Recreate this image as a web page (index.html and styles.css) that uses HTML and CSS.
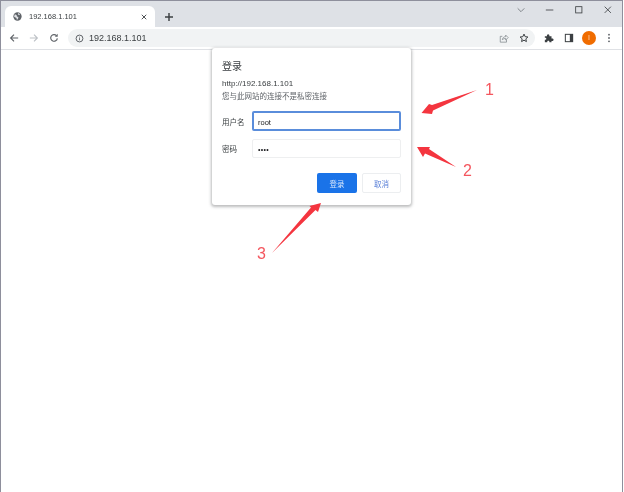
FILE: index.html
```html
<!DOCTYPE html>
<html lang="zh-CN">
<head>
    <meta charset="UTF-8">
    <meta name="viewport" content="width=device-width, initial-scale=1.0">
    <title>192.168.1.101</title>
    <link rel="stylesheet" href="styles.css">
</head>
<body>
    <div class="window">
        <div class="tabstrip">
            <div class="tab">
                <svg class="favicon" viewBox="0 0 10 10"><circle cx="5" cy="5" r="4.6" fill="#5f6368"/><path d="M2 2.6l2 .8.4 1.6 1.6.6-.4 2-1.2 1.4-.6-2.2L1.2 5.4zM6 1l1.8 1.4-1 1.2L5.4 2.4z" fill="#dfe1e5"/></svg>
                <span class="tab-title">192.168.1.101</span>
                <svg class="tab-close" viewBox="0 0 8 8"><path d="M1 1l6 6M7 1L1 7" stroke="#3c4043" stroke-width="1.2"/></svg>
            </div>
            <svg class="new-tab" viewBox="0 0 10 10"><path d="M5 0v10M0 5h10" stroke="#3c4043" stroke-width="1.8"/></svg>
            <div class="window-controls">
                <svg viewBox="0 0 12 12"><path d="M2 4l4 4 4-4" fill="none" stroke="#70757a"/></svg>
                <svg viewBox="0 0 12 12"><path d="M1 6h9" stroke="#3c4043"/></svg>
                <svg viewBox="0 0 12 12"><rect x="2" y="2" width="7.5" height="7.5" fill="none" stroke="#3c4043"/></svg>
                <svg viewBox="0 0 12 12"><path d="M2 2l7.5 7.5M9.5 2L2 9.5" stroke="#3c4043"/></svg>
            </div>
        </div>
        <div class="toolbar">
            <svg class="nav" viewBox="0 0 12 12"><path d="M11 6H2M6 2L2 6l4 4" fill="none" stroke="#5f6368" stroke-width="1.4"/></svg>
            <svg class="nav" viewBox="0 0 12 12"><path d="M1 6h9M6 2l4 4-4 4" fill="none" stroke="#bdc1c6" stroke-width="1.4"/></svg>
            <svg class="nav" viewBox="0 0 12 12"><path d="M10 6.5A4 4 0 1 1 9 3.2" fill="none" stroke="#5f6368" stroke-width="1.4"/><path d="M10.4 1v3.4H7z" fill="#5f6368"/></svg>
            <div class="omnibox">
                <svg class="info" viewBox="0 0 10 10"><circle cx="5" cy="5" r="3.8" fill="none" stroke="#5f6368" stroke-width="1.1"/><path d="M5 3v.9M5 4.6v2.4" stroke="#5f6368"/></svg>
                <span class="url">192.168.1.101</span>
                <svg class="omni-icon share" viewBox="0 0 12 12"><path d="M4 4H1.5v7H9V8M4 8c.3-2.500 2-3.600 4-3.600V2.500l3 3-3 3V6.500C6.500 6.500 5 7 4 8z" fill="none" stroke="#80868b" stroke-width=".9"/></svg>
                <svg class="omni-icon" viewBox="0 0 12 12"><path d="M6 1.300l1.400 3.100 3.300.4-2.500 2.200.7 3.300L6 8.600 3.100 10.300l.7-3.300L1.300 4.800l3.300-.4z" fill="none" stroke="#3c4043" stroke-width="1.2"/></svg>
            </div>
            <div class="toolbar-actions">
                <svg class="puzzle" viewBox="0 0 12 12"><path d="M1 4h2.500C3.300 2.600 4 1.500 5 1.500S6.700 2.600 6.500 4H9v2.500c1.400-.2 2.500.5 2.500 1.500S10.400 9.700 9 9.500V11H6.500c.2-1.200-.5-1.800-1.300-1.800S3.700 9.800 3.900 11H1V8.200c1 .2 1.800-.4 1.800-1.200S2 5.600 1 5.800z" fill="#3c4043"/></svg>
                <svg class="panel" viewBox="0 0 12 12"><rect x="1" y="1" width="10" height="10" fill="#3c4043"/><rect x="2.200" y="2.200" width="4.800" height="7.600" fill="#fff"/></svg>
                <div class="avatar">I</div>
                <svg class="dots" viewBox="0 0 4 12"><circle cx="2" cy="2" r="1.1" fill="#5f6368"/><circle cx="2" cy="6" r="1.1" fill="#5f6368"/><circle cx="2" cy="10" r="1.1" fill="#5f6368"/></svg>
            </div>
        </div>
        <div class="page"></div>
    </div>

    <div class="dialog">
        <h2 class="dialog-title">登录</h2>
        <p class="dialog-url">http://192.168.1.101</p>
        <p class="dialog-note">您与此网站的连接不是私密连接</p>
        <div class="field">
            <label>用户名</label>
            <div class="input focused">root</div>
        </div>
        <div class="field">
            <label>密码</label>
            <div class="input dots-value">••••</div>
        </div>
        <div class="dialog-buttons">
            <button class="btn primary">登录</button>
            <button class="btn">取消</button>
        </div>
    </div>

    <svg class="arrows" viewBox="0 0 624 492">
        <polygon points="477,90 432,105 429,104 421.500,113 432,114 433,110.500" fill="#f4353f"/>
        <polygon points="456,167 429,149 430,147 417,147 423,157 425,153.500" fill="#f4353f"/>
        <polygon points="272,253 311,207.500 309.500,206 321,203 318,212 315.500,210" fill="#f4353f"/>
    </svg>
    <span class="mark mark-1">1</span>
    <span class="mark mark-2">2</span>
    <span class="mark mark-3">3</span>
</body>
</html>
```

FILE: styles.css
```css
html, body {
    margin: 0;
    padding: 0;
    width: 624px;
    height: 492px;
    overflow: hidden;
    background: #fff;
    font-family: "Liberation Sans", "Noto Sans CJK SC", sans-serif;
}

.window {
    box-sizing: border-box;
    width: 623px;
    height: 492px;
    display: flex;
    flex-direction: column;
    border: 1px solid #8e8f9c;
    border-bottom: none;
}

/* tab strip */
.tabstrip {
    height: 26px;
    flex: none;
    display: flex;
    align-items: flex-end;
    padding-left: 4px;
    background: #dee1e6;
}

.tab {
    box-sizing: border-box;
    width: 150px;
    height: 21px;
    display: flex;
    align-items: center;
    padding: 0 8px;
    background: #fff;
    border-radius: 6px 6px 0 0;
}

.favicon {
    width: 9px;
    height: 9px;
}

.tab-title {
    margin-left: 7px;
    font-size: 7.5px;
    color: #3c4043;
}

.tab-close {
    width: 6px;
    height: 6px;
    margin-left: auto;
}

.new-tab {
    width: 8px;
    height: 8px;
    margin: 0 0 6px 10px;
}

.window-controls {
    margin-left: auto;
    align-self: flex-start;
    display: flex;
    gap: 19px;
    padding: 4px 9px 0 0;
}

.window-controls svg {
    width: 10px;
    height: 10px;
}

/* toolbar */
.toolbar {
    height: 22px;
    flex: none;
    display: flex;
    align-items: center;
    padding-left: 8px;
    background: #fff;
    border-bottom: 1px solid #dfe1e5;
}

.nav {
    width: 10px;
    height: 10px;
    margin-right: 10px;
}

.omnibox {
    box-sizing: border-box;
    width: 467px;
    height: 18px;
    display: flex;
    align-items: center;
    margin-left: -1px;
    padding: 0 6px 0 7px;
    background: #f1f3f4;
    border-radius: 9px;
}

.info {
    width: 9px;
    height: 9px;
}

.url {
    margin-left: 5px;
    font-size: 9px;
    color: #3c4043;
}

.omni-icon {
    width: 10px;
    height: 10px;
}

.share {
    margin-left: auto;
    margin-right: 10px;
}

.toolbar-actions {
    display: flex;
    align-items: center;
    margin-left: 9px;
}

.puzzle {
    width: 10px;
    height: 10px;
}

.panel {
    width: 10px;
    height: 10px;
    margin-left: 10px;
}

.avatar {
    width: 14px;
    height: 14px;
    margin-left: 8px;
    border-radius: 50%;
    background: #f06c00;
    color: #fbd9bd;
    font-size: 7px;
    line-height: 14px;
    text-align: center;
}

.dots {
    width: 4px;
    height: 10px;
    margin-left: 11px;
}

.page {
    flex: 1;
    background: #fff;
}

/* the reference is a slightly soft, rescaled capture */
.window, .dialog, .arrows, .mark {
    filter: blur(0.35px);
}

/* login dialog, sits over the page */
.dialog {
    position: absolute;
    left: 212px;
    top: 48px;
    box-sizing: border-box;
    width: 199px;
    height: 157px;
    padding: 11px 10px 0 10px;
    background: #fff;
    border-radius: 3px;
    box-shadow: 0 1px 3px 1px rgba(60, 64, 67, 0.35);
    color: #3c4043;
}

.dialog-title {
    margin: 0;
    padding-top: 2px;
    font-size: 10px;
    font-weight: normal;
    line-height: 12px;
    color: #3c4043;
}

.dialog-url {
    margin: 6px 0 0;
    font-size: 8px;
    line-height: 10px;
}

.dialog-note {
    margin: 3px 0 9px;
    font-size: 7.5px;
    line-height: 10px;
    color: #5f6368;
}

.field {
    display: flex;
    align-items: center;
    margin-bottom: 8px;
}

.field label {
    width: 30px;
    flex: none;
    font-size: 7.5px;
}

.input {
    box-sizing: border-box;
    width: 150px;
    height: 19px;
    padding: 1px 5px 0;
    border: 1px solid #eeeff0;
    border-radius: 2px;
    font-size: 7.5px;
    line-height: 17px;
    color: #202124;
}

.input.focused {
    height: 20px;
    border: 2px solid #5a8ddb;
    line-height: 17px;
    padding: 1px 4px 0;
}

.dots-value {
    font-size: 7px;
    letter-spacing: 0.3px;
}

.dialog-buttons {
    display: flex;
    justify-content: flex-end;
    gap: 5px;
    margin-top: 15px;
}

.btn {
    box-sizing: border-box;
    width: 39px;
    height: 20px;
    padding: 0;
    border: 1px solid #eceef0;
    border-radius: 2px;
    background: #fff;
    color: #5a80d8;
    font-family: inherit;
    font-size: 7.5px;
}

.btn.primary {
    width: 40px;
    border: none;
    background: #1a73e8;
    color: #d6e6fb;
}

/* annotations */
.arrows {
    position: absolute;
    left: 0;
    top: 0;
    width: 624px;
    height: 492px;
}

.mark {
    position: absolute;
    font-family: "Liberation Sans", sans-serif;
    font-size: 16px;
    line-height: 18px;
    color: #f4565e;
}

.mark-1 {
    left: 485px;
    top: 81px;
}

.mark-2 {
    left: 463px;
    top: 162px;
}

.mark-3 {
    left: 257px;
    top: 245px;
}
```
